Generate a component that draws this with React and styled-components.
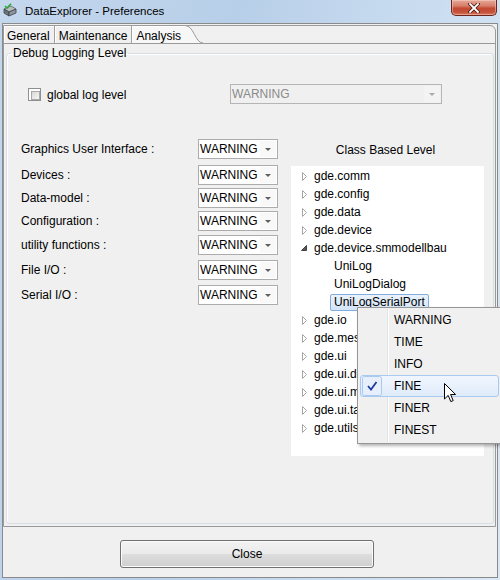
import React from 'react';
import styled, { createGlobalStyle } from 'styled-components';

const Global = createGlobalStyle`
  html, body { margin: 0; padding: 0; background: #f0f0f0; }
  body { font-family: "Liberation Sans", Arial, sans-serif; font-size: 12px; color: #000; }
  * { box-sizing: border-box; }
`;

const Window = styled.div`
  width: 500px;
  height: 580px;
  padding: 0 2px 2px 2px;
  display: flex;
  flex-direction: column;
  position: relative;
  overflow: hidden;
  background: linear-gradient(100deg, #c3d7ed 0%, #b8cfe9 40%, #c9dcf0 70%, #dbe8f5 100%);
`;

const TitleBar = styled.div`
  height: 23px;
  display: flex;
  align-items: flex-start;
  flex: 0 0 auto;
`;

const AppIcon = styled.svg`
  margin: 3px 0 0 1px;
  flex: 0 0 auto;
`;

const TitleText = styled.div`
  margin: 4px 0 0 8px;
  font-size: 11.5px;
  line-height: 14px;
  color: #000;
`;

const CloseX = styled.div`
  margin-left: auto;
  margin-right: 1px;
  width: 46px;
  height: 16px;
  border: 1px solid #6b2419;
  border-top: none;
  border-radius: 0 0 5px 5px;
  background: linear-gradient(to bottom, #e6a899 0%, #d77d69 40%, #c24a33 55%, #c4513a 80%, #d9775f 100%);
  box-shadow: inset 0 0 0 1px rgba(255, 220, 210, 0.45);
  display: flex;
  align-items: center;
  justify-content: center;
`;

const Client = styled.div`
  flex: 1;
  display: flex;
  flex-direction: column;
  border: 1px solid #8a8a8a;
  background: #f0f0f0;
`;

const Folder = styled.div`
  flex: 1;
  margin: 1px 1px 0 0;
  border: 1px solid #9a9a9a;
  border-top-right-radius: 6px;
  display: flex;
  flex-direction: column;
`;

const TabRow = styled.div`
  height: 18px;
  display: flex;
  border-bottom: 1px solid #9a9a9a;
`;

const Tab = styled.div`
  position: relative;
  height: 17px;
  line-height: 14px;
  padding: 3px 4px 0 ${p => (p.$first ? 3 : 4)}px;
  margin-right: ${p => (p.$active ? 18 : 0)}px;
  border-right: ${p => (p.$active ? 'none' : '1px solid #a0a0a0')};
  background: ${p => (p.$active ? '#f7f7f7' : '#f0f0f0')};
  box-shadow: inset 1px 1px 0 #ffffff;
  white-space: nowrap;
`;

const TabCurve = styled.svg`
  position: absolute;
  top: -1px;
  right: -18px;
`;

const Panel = styled.div`
  flex: 1;
  display: flex;
  padding: 2px 1px 2px 2px;
`;

const Group = styled.fieldset`
  flex: 1;
  margin: 0;
  padding: 0;
  min-width: 0;
  border: 1px solid #d5dfe5;
  border-radius: 3px;
  box-shadow: inset 1px 1px 0 #ffffff;
  display: flex;
  flex-direction: column;
`;

const Legend = styled.legend`
  margin-left: 4px;
  padding: 0 2px;
  line-height: 15px;
`;

const GlobalRow = styled.div`
  margin-top: 23px;
  padding-left: 21px;
  height: 20px;
  display: flex;
  align-items: center;
`;

const CheckArea = styled.label`
  width: 202px;
  display: flex;
  align-items: center;
  gap: 6px;
  line-height: 16px;
  padding-top: 1px;
`;

const CheckBox = styled.span`
  width: 13px;
  height: 13px;
  border: 1px solid #8e8f8f;
  background: #fff;
  padding: 2px;
  display: block;
  &::after {
    content: '';
    display: block;
    width: 100%;
    height: 100%;
    border: 1px solid #a8a8a8;
    background: linear-gradient(135deg, #d8d8d8, #f7f7f7);
  }
`;

const Combo = styled.div`
  width: ${p => p.$w}px;
  height: 20px;
  border: 1px solid ${p => (p.$disabled ? '#b5b5b5' : '#acacac')};
  background: ${p => (p.$disabled ? '#f0f0f0' : '#ffffff')};
  color: ${p => (p.$disabled ? '#8a8a8a' : '#000')};
  display: flex;
  align-items: stretch;
  flex: 0 0 auto;
`;

const ComboText = styled.div`
  flex: 1;
  padding-left: 1px;
  line-height: 18px;
  overflow: hidden;
  white-space: nowrap;
`;

const ComboArrow = styled.div`
  width: 16px;
  margin: 1px;
  background: ${p => (p.$disabled ? '#f3f3f3' : '#f8f8f8')};
  display: flex;
  align-items: center;
  justify-content: center;
  &::after {
    content: '';
    border-left: 3px solid transparent;
    border-right: 3px solid transparent;
    border-top: 3px solid ${p => (p.$disabled ? '#a8a8a8' : '#5f5f5f')};
  }
`;

const Main = styled.div`
  margin-top: 35px;
  padding-left: 14px;
  display: flex;
  gap: 13px;
`;

const LeftCol = styled.div`
  display: flex;
  flex-direction: column;
`;

const LevelRow = styled.div`
  display: flex;
  align-items: center;
  height: 20px;
  margin-top: ${p => p.$mt}px;
`;

const LevelLabel = styled.div`
  width: 177px;
  white-space: nowrap;
`;

const RightCol = styled.div`
  width: 193px;
  display: flex;
  flex-direction: column;
`;

const ColHeader = styled.div`
  padding: 3px 4px 0 0;
  line-height: 16px;
  margin-bottom: 8px;
  text-align: center;
`;

const Tree = styled.div`
  height: 290px;
  background: #ffffff;
  padding-top: 1px;
  display: flex;
  flex-direction: column;
`;

const TreeRow = styled.div`
  height: 18px;
  display: flex;
  align-items: center;
  padding-left: ${p => 9 + p.$level * 20}px;
`;

const Expander = styled.span`
  width: 14px;
  height: 18px;
  flex: 0 0 auto;
  display: block;
`;

const TreeLabel = styled.span`
  margin-left: -4px;
  padding: 0 3px;
  height: 17px;
  line-height: 15px;
  white-space: nowrap;
  border: 1px solid ${p => (p.$selected ? '#84acdd' : 'transparent')};
  border-radius: 2px;
  background: ${p => (p.$selected ? 'linear-gradient(#eaf2fc, #d3e4f8)' : 'transparent')};
`;

const Footer = styled.div`
  height: 50px;
  flex: 0 0 auto;
  padding: 13px 0 0 117px;
`;

const Button = styled.button`
  width: 254px;
  height: 28px;
  border: 1px solid #707070;
  border-radius: 3px;
  font: inherit;
  font-size: 12px;
  color: #000;
  background: linear-gradient(to bottom, #f2f2f2 0%, #ebebeb 48%, #dddddd 52%, #cfcfcf 100%);
  box-shadow: inset 0 0 0 1px #fcfcfc;
  padding: 0;
`;

const Menu = styled.div`
  position: absolute;
  left: 357px;
  top: 307px;
  width: 145px;
  height: 137px;
  border: 1px solid #979797;
  background: #f0f0f0;
  box-shadow: 2px 2px 3px rgba(0, 0, 0, 0.3);
  padding: 1px 2px;
  display: flex;
  flex-direction: column;
`;

const MenuGutterLine = styled.div`
  position: absolute;
  left: 29px;
  top: 1px;
  bottom: 1px;
  width: 2px;
  border-left: 1px solid #e2e3e3;
  border-right: 1px solid #ffffff;
`;

const MenuItem = styled.div`
  position: relative;
  height: 22px;
  display: flex;
  align-items: center;
  padding-left: 33px;
  border: 1px solid ${p => (p.$hot ? '#a8caf0' : 'transparent')};
  border-radius: 3px;
  background: ${p => (p.$hot ? 'linear-gradient(#f1f6fd, #dfebfa)' : 'transparent')};
`;

const CheckMark = styled.svg`
  position: absolute;
  left: 1px;
  top: 0px;
`;

const Cursor = styled.svg`
  position: absolute;
  left: 444px;
  top: 383px;
`;

const HollowArrow = () => (
  <svg width="14" height="18">
    <polygon points="2.5,5.5 6.5,9.5 2.5,13.5" fill="#ffffff" stroke="#a6a6a6" strokeWidth="1" />
  </svg>
);

const OpenArrow = () => (
  <svg width="14" height="18">
    <polygon points="6.5,6.5 6.5,11.5 1.5,11.5" fill="#595959" stroke="#404040" strokeWidth="1" />
  </svg>
);

const levels = [
  { t: 'Graphics User Interface :', mt: 0 },
  { t: 'Devices :', mt: 6 },
  { t: 'Data-model :', mt: 3 },
  { t: 'Configuration :', mt: 3 },
  { t: 'utility functions :', mt: 4 },
  { t: 'File I/O :', mt: 5 },
  { t: 'Serial I/O :', mt: 5 },
];

const tree = [
  { t: 'gde.comm', l: 0, e: 'c' },
  { t: 'gde.config', l: 0, e: 'c' },
  { t: 'gde.data', l: 0, e: 'c' },
  { t: 'gde.device', l: 0, e: 'c' },
  { t: 'gde.device.smmodellbau', l: 0, e: 'o' },
  { t: 'UniLog', l: 1 },
  { t: 'UniLogDialog', l: 1 },
  { t: 'UniLogSerialPort', l: 1, s: true },
  { t: 'gde.io', l: 0, e: 'c' },
  { t: 'gde.messages', l: 0, e: 'c' },
  { t: 'gde.ui', l: 0, e: 'c' },
  { t: 'gde.ui.dialog', l: 0, e: 'c' },
  { t: 'gde.ui.menu', l: 0, e: 'c' },
  { t: 'gde.ui.tab', l: 0, e: 'c' },
  { t: 'gde.utils', l: 0, e: 'c' },
];

const menuItems = ['WARNING', 'TIME', 'INFO', 'FINE', 'FINER', 'FINEST'];

export default function App() {
  return (
    <>
      <Global />
      <Window>
        <TitleBar>
          <AppIcon width="14" height="14" viewBox="0 0 14 14">
            <polygon points="1,6 8,3 13,6 6,9" fill="#b8bcc0" stroke="#5a5f66" strokeWidth="0.8" />
            <polygon points="1,6 6,9 6,13 1,10" fill="#6c737b" stroke="#3c4148" strokeWidth="0.8" />
            <polygon points="6,9 13,6 13,10 6,13" fill="#8e959c" stroke="#3c4148" strokeWidth="0.8" />
            <polyline points="2,3 4,5 8,0.8" fill="none" stroke="#2fa83a" strokeWidth="1.6" />
          </AppIcon>
          <TitleText>DataExplorer - Preferences</TitleText>
          <CloseX>
            <svg width="12" height="10" viewBox="0 0 12 10">
              <path d="M2 1 L10 9 M10 1 L2 9" stroke="#4a1a12" strokeWidth="3.4" strokeLinecap="square" />
              <path d="M2 1 L10 9 M10 1 L2 9" stroke="#ffffff" strokeWidth="1.8" strokeLinecap="square" />
            </svg>
          </CloseX>
        </TitleBar>
        <Client>
          <Folder>
            <TabRow>
              <Tab $first>General</Tab>
              <Tab>Maintenance</Tab>
              <Tab $active>
                Analysis
                <TabCurve width="18" height="19" viewBox="0 0 18 19">
                  <path d="M0 0 L0 18 L18 18 C 10 18, 9 0.5, 0 0.5 Z" fill="#f7f7f7" />
                  <path d="M0 0.5 C 9 0.5, 10 18, 18 18" fill="none" stroke="#9a9a9a" strokeWidth="1" />
                </TabCurve>
              </Tab>
            </TabRow>
            <Panel>
              <Group>
                <Legend>Debug Logging Level</Legend>
                <GlobalRow>
                  <CheckArea>
                    <CheckBox />
                    <span>global log level</span>
                  </CheckArea>
                  <Combo $w={212} $disabled>
                    <ComboText>WARNING</ComboText>
                    <ComboArrow $disabled />
                  </Combo>
                </GlobalRow>
                <Main>
                  <LeftCol>
                    {levels.map(l => (
                      <LevelRow key={l.t} $mt={l.mt}>
                        <LevelLabel>{l.t}</LevelLabel>
                        <Combo $w={80}>
                          <ComboText>WARNING</ComboText>
                          <ComboArrow />
                        </Combo>
                      </LevelRow>
                    ))}
                  </LeftCol>
                  <RightCol>
                    <ColHeader>Class Based Level</ColHeader>
                    <Tree>
                      {tree.map(n => (
                        <TreeRow key={n.t} $level={n.l}>
                          <Expander>
                            {n.e === 'c' && <HollowArrow />}
                            {n.e === 'o' && <OpenArrow />}
                          </Expander>
                          <TreeLabel $selected={n.s}>{n.t}</TreeLabel>
                        </TreeRow>
                      ))}
                    </Tree>
                  </RightCol>
                </Main>
              </Group>
            </Panel>
          </Folder>
          <Footer>
            <Button>Close</Button>
          </Footer>
        </Client>
        <Menu>
          <MenuGutterLine />
          {menuItems.map(m => (
            <MenuItem key={m} $hot={m === 'FINE'}>
              {m === 'FINE' && (
                <CheckMark width="20" height="20" viewBox="0 0 20 20">
                  <rect x="0.5" y="0.5" width="19" height="19" rx="2" fill="#e6effb" stroke="#a8caf0" />
                  <path d="M6 10 L9 13.5 L14.5 6" fill="none" stroke="#1f3a9e" strokeWidth="1.8" />
                </CheckMark>
              )}
              {m}
            </MenuItem>
          ))}
        </Menu>
        <Cursor width="13" height="21" viewBox="0 0 13 21">
          <path d="M0.5 0.5 L0.5 16 L4.2 12.4 L6.8 18.6 L9.2 17.6 L6.6 11.5 L11.6 11.5 Z" fill="#ffffff" stroke="#000000" strokeWidth="1" strokeLinejoin="round" />
        </Cursor>
      </Window>
    </>
  );
}
